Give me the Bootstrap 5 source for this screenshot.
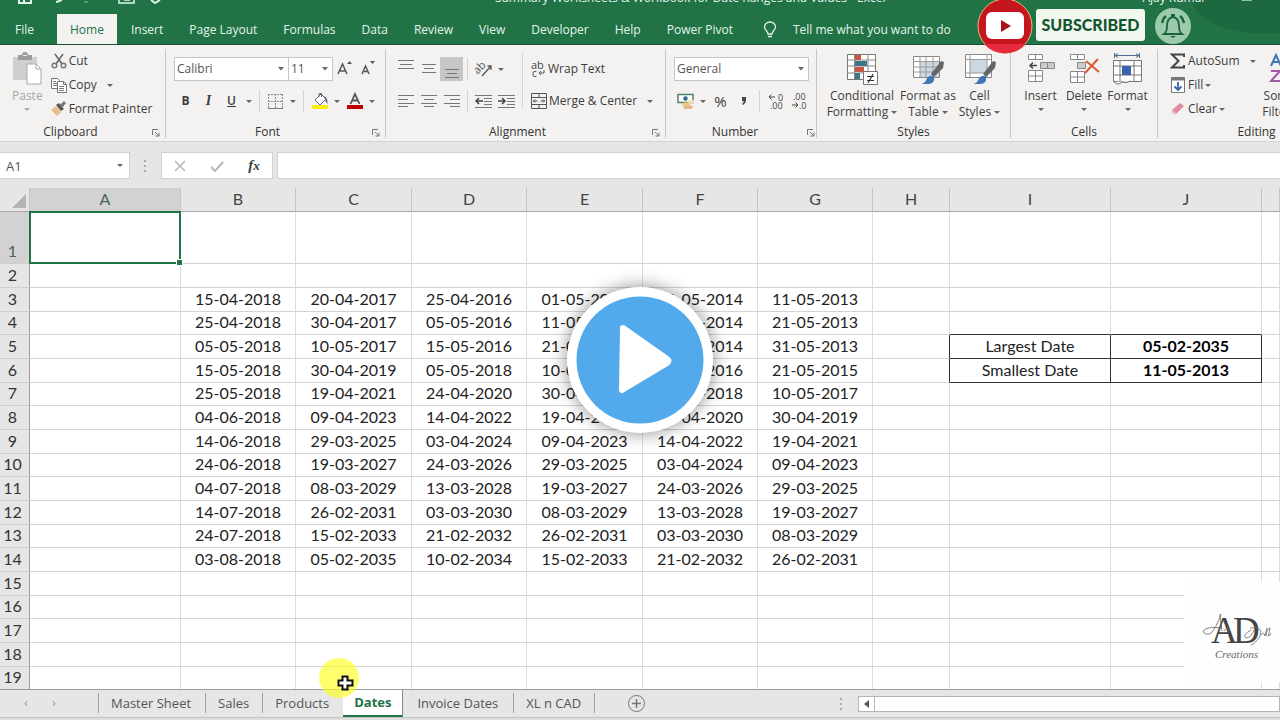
<!DOCTYPE html>
<html lang="en">
<head>
<meta charset="utf-8">
<meta name="viewport" content="width=device-width, initial-scale=1">
<title>Excel - Dates</title>
<link href="https://cdn.jsdelivr.net/npm/bootstrap@5.3.0/dist/css/bootstrap.min.css" rel="stylesheet">
<style>
:root{--green:#217346;--ink:#3c3c3c}
body{font-family:"Open Sans","Noto Sans",sans-serif;font-size:12px;line-height:16px;color:var(--ink);background:#e6e6e6;overflow:hidden}
button{font:inherit;color:inherit;background:none;border:0;padding:0;white-space:nowrap}
svg{display:block;flex:none}
.app-top{background:var(--green);color:#e4f3ea;border-bottom:1px solid #17502f;background-image:radial-gradient(ellipse 70px 34px at 1262px 0,#1d693f 98%,transparent)}
.title-strip{height:6px}
.title-strip .name-text{flex:1;text-align:center;padding-left:64px}
.tab-strip{height:38px;padding-top:8px}
.tab-strip a{color:#e4f3ea;text-decoration:none;padding:2px 13px 0;line-height:28px;white-space:nowrap;font-weight:500}
.tab-strip a.file{padding-left:15px;padding-right:23px}
.tab-strip a.active{background:#f3f2f1;color:var(--green);margin-right:1px}
.ribbon{background:#f3f2f1;height:97px;padding-top:3px;border-bottom:1px solid #d2d2d2}
.grp{flex:none;border-right:1px solid #c6c6c6;margin:1px 0 3px}
.grp-body{height:75px}
.grp-foot{height:16px;color:#333}
.w-clip{width:166px}.w-font{width:220px}.w-align{width:280px}.w-num{width:151px}.w-sty{width:194px}.w-cell{width:147px}.w-edit{width:198px}
.line3{height:24px;gap:2px}
.stack2{padding-top:8px;gap:8px}
.line2{height:24px}
button.line2{gap:2px}
.ib{display:flex;align-items:center;justify-content:center;width:23px;height:24px}
.ib.on{background:#c8c6c4}
.ib.slim{width:12px}
.vr-line{width:1px;height:22px;background:#d4d4d4}
.caret{display:inline-block;border:3px solid transparent;border-top-color:#666;border-bottom:0;vertical-align:middle}
.pick{appearance:none;border:1px solid #c6c6c6;background:#fff url("data:image/svg+xml,%3Csvg xmlns='http://www.w3.org/2000/svg' width='6' height='4'%3E%3Cpath d='M0 0h6L3 3.5z' fill='%23666'/%3E%3C/svg%3E") no-repeat right 4px center;height:24px;padding:0 2px;color:#555;font:inherit}
.big{display:flex;flex-direction:column;align-items:center;line-height:16px}
.big .pic{height:39px;display:flex;align-items:center}
.fbar{height:46px;padding-top:10px}
.fbar .cellbox{background:#fff;border:1px solid #d0d0d0;height:27px}
.fbar input{border:0;outline:0;background:none;min-width:0;font:inherit;font-size:13px;color:#555}
.namebox{width:130px;padding:0 6px}
.fxbox{width:112px}
.grid-wrap{flex:1;min-height:0;overflow:hidden;background:#fff}
.sheet{table-layout:fixed;border-collapse:separate;border-spacing:0;width:100%;font-family:Lato,sans-serif;font-size:16px;line-height:20px;color:#222;background:#fff}
.sheet th,.sheet td{padding:0 0 2px;text-align:center;vertical-align:middle;font-weight:400;border-right:1px solid #dcdcdc;border-bottom:1px solid #d4d4d4;white-space:nowrap;overflow:hidden}
.sheet thead th{background:#e6e6e6;color:#444;border-right-color:#c4c4c4;border-bottom-color:#a8a8a8;height:24px}
.sheet tbody th{background:#e6e6e6;color:#333;border-right-color:#9c9c9c;border-bottom-color:#cfcfcf;padding-right:4px}
.sheet tbody tr{height:24px}
.sheet tbody tr:nth-child(3n+1){height:23px}
.sheet tbody tr:first-child{height:52px}
.sheet tbody tr:first-child th{vertical-align:bottom;background:#d2d2d2;color:#4c6356}
.sheet thead th.hot{background:#d2d2d2;color:#4c6356}
.sheet td.sel{position:relative;overflow:visible;border-color:transparent}
.sheet td.sel::before{content:"";position:absolute;inset:-1px;border:2px solid var(--green)}
.sheet td.sel::after{content:"";position:absolute;right:-3px;bottom:-3px;width:5px;height:5px;background:var(--green);border:1px solid #fff;box-sizing:content-box}
.sheet .bx,.sheet .bx-over{border-bottom-color:#333}
.sheet .bx,.sheet .bx-left{border-right-color:#333}
.sheet .bx.fw-bold{font-weight:700;color:#000}
.sheet .corner{position:relative}
.tri{position:absolute;right:3px;bottom:3px;border-left:14px solid transparent;border-bottom:14px solid #b4b4b4}
.c-head{width:30px}.c-a,.c-j{width:151px}.c-even{width:115px}.c-odd{width:116px}.c-h{width:77px}.c-i{width:161px}
.tabs-foot{height:29px;border-top:1px solid #9c9c9c;border-bottom:1px solid #c4c4c4;font-size:13px;color:#555}
.tabs-foot a{color:#555;text-decoration:none;line-height:20px;border-right:1px solid #a0a0a0;padding:0 13px 0 12px;margin-top:3px;white-space:nowrap}
.tabs-foot a.first{border-left:1px solid #a0a0a0;padding-right:14px}
.tabs-foot a.last-idle{border-right-color:transparent}
.tabs-foot a.invoice{padding-left:14px;padding-right:15px}
.tabs-foot a.active{background:#fff;color:var(--green);font-weight:700;border-bottom:2px solid var(--green);border-right:1px solid #888;margin-top:0;line-height:25px;padding:0 11px}
.hbar{background:#fff;border:1px solid #b4b4b4;height:16px;margin-top:6px}
.hbar .arrow{width:16px;border-right:1px solid #b4b4b4}
.status-foot{height:2px;background:#dedede}
.ov{position:absolute}
.yt{right:247px;top:-2px}
.subd{right:135px;top:9px;width:109px;height:32px;background:#f2f8f0;border-radius:3px;color:#14562f;font-family:Lato,sans-serif;font-weight:900;font-size:16px}
.bell{right:89px;top:8px}
.logo-ad{right:0;bottom:38px;width:96px;height:100px;background:#fefefe}
.play{left:50%;top:50%;transform:translate(-50%,-50%);width:146px;height:146px;border-radius:50%;background:#fff;box-shadow:0 0 18px rgba(0,0,0,.45)}
.glow{left:319px;bottom:22px;width:40px;height:40px;border-radius:50%;background:rgba(255,255,30,.65)}
.cur{left:337px;bottom:28px}
</style>
</head>
<body>
<div class="d-flex flex-column vh-100 position-relative overflow-hidden">
<header class="app-top">
  <div class="title-strip d-flex align-items-end overflow-hidden">
    <svg width="190" height="6" viewBox="0 0 190 6" fill="none" stroke="#e4f3ea" stroke-width="2"><path d="M19 0v3h12V0M24 3V0M56 2q5-1 6-3"/><path d="M119 0v3h15V0M124 0h6" stroke-width="1.5"/><path d="M151 0l4 3 5-3"/><path d="M84 2h4" stroke="#4d9a6c"/></svg>
    <div class="name-text text-nowrap">Summary Worksheets &amp; Workbook for Date Ranges and Values - Excel</div>
    <div class="text-nowrap px-3">Ajay Kumar &nbsp; &nbsp; &nbsp; &nbsp; &nbsp; ▭ &nbsp; &nbsp;</div>
  </div>
  <nav class="tab-strip d-flex">
    <a class="file" href="#">File</a><a class="active" href="#">Home</a><a href="#">Insert</a><a href="#">Page Layout</a><a href="#">Formulas</a><a href="#">Data</a><a href="#">Review</a><a href="#">View</a><a href="#">Developer</a><a href="#">Help</a><a href="#">Power Pivot</a>
    <a href="#" class="d-flex align-items-center gap-3 ms-1"><svg width="14" height="18" viewBox="0 0 14 18" fill="none" stroke="#e4f3ea" stroke-width="1.3"><path d="M5 13c0-3-3.500-4-3.500-7a5.500 5 0 0 1 11 0c0 3-3.500 4-3.500 7zM5 15.500h4"/></svg>Tell me what you want to do</a>
  </nav>
</header>

<section class="ribbon d-flex overflow-hidden" aria-label="Ribbon">
  <div class="grp w-clip">
    <div class="grp-body d-flex">
      <button class="big ps-2 ms-1 me-2" style="color:#a6a6a6"><span class="pic"><svg width="30" height="33" viewBox="0 0 30 33"><path d="M1 5h24v23H1z" fill="#cfcfcf"/><path d="M6 3h4a3 3 0 0 1 6 0h4v5H6z" fill="#9c9c9c"/><path d="M11 3.500h4" stroke="#eee"/><path d="M15 12h9l5 5v15H15z" fill="#fff" stroke="#a8a8a8"/><path d="M24 12v5h5" fill="none" stroke="#a8a8a8"/></svg></span>Paste<span class="caret mt-1 opacity-50"></span></button>
      <div>
        <button class="line3 d-flex align-items-center"><svg width="16" height="16" viewBox="0 0 16 16" fill="none" stroke="#666" stroke-width="1.500"><path d="M4 1l7 10M12 1L5 11"/><circle cx="3.500" cy="12.500" r="2.300" stroke="#777"/><circle cx="12.500" cy="12.500" r="2.300" stroke="#777"/></svg>Cut</button>
        <button class="line3 d-flex align-items-center"><svg width="16" height="16" viewBox="0 0 16 16" fill="#fff" stroke="#777"><path d="M.5 1.500h6l2 2v8h-8zM2 4.500h3M2 6.500h4M2 8.500h4"/><path d="M6.500 4.500h6l3 3v8h-9zM12.500 4.500v3h3M8 9.500h5M8 11.500h5M8 13.500h5"/></svg>Copy<span class="caret ms-2"></span></button>
        <button class="line3 d-flex align-items-center"><svg width="16" height="16" viewBox="0 0 16 16"><path d="M0 9l5-4 5 6-4 4z" fill="#e8bd8c"/><path d="M5 4l3-2 5 6-3 2z" fill="#555"/><path d="M9 4l4-4 2 2-4 5z" fill="#777"/></svg>Format Painter</button>
      </div>
    </div>
    <div class="grp-foot d-flex"><span class="flex-fill text-center ps-0 pe-2">Clipboard</span><button class="ib slim launch h-auto me-1" aria-label="Clipboard options"></button></div>
  </div>

  <div class="grp w-font">
    <div class="grp-body stack2 d-flex flex-column ps-2">
      <div class="line2 d-flex">
        <select class="pick rounded-0" aria-label="Font" style="width:115px"><option>Calibri</option></select><select class="pick rounded-0 border-start-0" aria-label="Font size" style="width:44px"><option>11</option></select>
        <button class="ib" aria-label="Grow font"><svg width="16" height="18" viewBox="0 0 16 18" fill="none" stroke="#555" stroke-width="1.500"><path d="M1 14L5.500 4 10 14M3 11h5"/><path d="M10 4l2.500-3L15 4z" fill="#555" stroke="none"/></svg></button>
        <button class="ib" aria-label="Shrink font"><svg width="16" height="18" viewBox="0 0 16 18" fill="none" stroke="#555" stroke-width="1.500"><path d="M2 14l3.500-8L9 14M4 11.500h4"/><path d="M10 1h5l-2.500 3z" fill="#555" stroke="none"/></svg></button>
      </div>
      <div class="line2 d-flex align-items-center">
        <button class="ib fw-bold">B</button><button class="ib fst-italic fw-bold" style="font-family:'Liberation Serif',serif;font-size:14px">I</button><button class="ib text-decoration-underline fw-semibold">U</button><button class="ib slim" aria-label="Underline style"><span class="caret"></span></button>
        <span class="vr-line mx-1"></span>
        <button class="ib" aria-label="Borders"><svg width="15" height="15" viewBox="0 0 15 15" fill="none" stroke="#888"><path d="M.5 0v14M14.500 0v14M7.500 0v14M0 .5h15M0 7.500h15" stroke-dasharray="2 1"/><path d="M0 14.500h15" stroke="#777"/></svg></button><button class="ib slim" aria-label="Border style"><span class="caret"></span></button>
        <span class="vr-line mx-1"></span>
        <button class="ib" aria-label="Fill colour"><svg width="18" height="18" viewBox="0 0 18 18"><path d="M1 13h16v4H1z" fill="#f4f000"/><path d="M4 8l6-6 5 5-6 6z" fill="#fff" stroke="#666"/><path d="M8 5V1.500h2.500V5" fill="none" stroke="#666"/><path d="M13 4q4 2 3.500 8Q14 9 13 4z" fill="#53658c"/></svg></button><button class="ib slim" aria-label="Fill colours"><span class="caret"></span></button>
        <button class="ib" aria-label="Font colour"><svg width="18" height="18" viewBox="0 0 18 18"><path d="M1 13h16v4H1z" fill="#c00000"/><path d="M4.500 12L9 2l4.500 10M6.500 8.500h5" fill="none" stroke="#555" stroke-width="1.800"/></svg></button><button class="ib slim" aria-label="Font colours"><span class="caret"></span></button>
      </div>
    </div>
    <div class="grp-foot d-flex"><span class="flex-fill text-center">Font</span><button class="ib slim launch h-auto me-1" aria-label="Font options"></button></div>
  </div>

  <div class="grp w-align">
    <div class="grp-body d-flex ps-2">
      <div class="stack2 d-flex flex-column">
        <div class="line2 d-flex align-items-center">
          <button class="ib" aria-label="Top align"><svg width="16" height="18" stroke="#777"><path d="M0 .5h16M2 4.500h12M0 8.500h16"/></svg></button><button class="ib" aria-label="Middle align"><svg width="16" height="18" stroke="#777"><path d="M1 4.500h14M3 8.500h10M1 12.500h14"/></svg></button><button class="ib on" aria-label="Bottom align"><svg width="16" height="18" stroke="#777"><path d="M1 9.500h14M3 13.500h10M1 17.500h14"/></svg></button>
          <span class="vr-line mx-1"></span>
          <button class="ib" aria-label="Orientation"><svg width="18" height="18" viewBox="0 0 18 18" fill="none" stroke="#555" stroke-width="1.300"><path d="M7 16L16 6M12.500 6H16v4"/><text x="-5" y="10" transform="rotate(-45 6 7)" font-size="11" fill="#555" stroke="none" dx="3">ab</text></svg></button><button class="ib slim" aria-label="Orientation choices"><span class="caret"></span></button>
        </div>
        <div class="line2 d-flex align-items-center">
          <button class="ib" aria-label="Align left"><svg width="16" height="14" stroke="#777"><path d="M0 1.500h16M0 5.500h10M0 9.500h16M0 12.500h10"/></svg></button><button class="ib" aria-label="Center"><svg width="16" height="14" stroke="#777"><path d="M0 1.500h16M3 5.500h10M0 9.500h16M3 12.500h10"/></svg></button><button class="ib" aria-label="Align right"><svg width="16" height="14" stroke="#777"><path d="M0 1.500h16M6 5.500h10M0 9.500h16M6 12.500h10"/></svg></button>
          <span class="vr-line mx-1"></span>
          <button class="ib" aria-label="Decrease indent"><svg width="17" height="15" fill="none" stroke="#777"><path d="M0 1.500h17M9 4.500h8M9 7.500h8M9 10.500h8M0 13.500h17"/><path d="M1 7h7M4 4L1 7l3 3" stroke="#444" stroke-width="1.500"/></svg></button><button class="ib" aria-label="Increase indent"><svg width="17" height="15" fill="none" stroke="#777"><path d="M0 1.500h17M9 4.500h8M9 7.500h8M9 10.500h8M0 13.500h17"/><path d="M0 7h7M4 4l3 3-3 3" stroke="#444" stroke-width="1.500"/></svg></button>
        </div>
      </div>
      <span class="vr-line h-75 mt-1 ms-1 me-2"></span>
      <div class="stack2 d-flex flex-column">
        <button class="line2 d-flex align-items-center"><svg width="15" height="17" viewBox="0 0 15 17" fill="#444"><text x="0" y="8" font-size="11">ab</text><text x="1" y="16" font-size="10">c</text><path d="M13 9v3H8M10 10l-2 2 2 2" fill="none" stroke="#555"/></svg>Wrap Text</button>
        <button class="line2 d-flex align-items-center"><svg width="16" height="16" viewBox="0 0 16 16" fill="none" stroke="#555"><path d="M.5.5h15v15H.5zM.5 4.500h15M.5 11.500h15M8 .5v4M8 11.500v4"/><path d="M2 8h4.500M9.500 8H14M4 6.500L2.500 8 4 9.500M12 6.500L13.500 8 12 9.500"/></svg>Merge &amp; Center<span class="caret ms-2"></span></button>
      </div>
    </div>
    <div class="grp-foot d-flex"><span class="flex-fill text-center">Alignment</span><button class="ib slim launch h-auto me-1" aria-label="Alignment options"></button></div>
  </div>

  <div class="grp w-num">
    <div class="grp-body stack2 d-flex flex-column ps-2">
      <select class="pick rounded-0" aria-label="Number format" style="width:135px"><option>General</option></select>
      <div class="line2 d-flex align-items-center">
        <button class="ib" aria-label="Accounting format"><svg width="18" height="17" viewBox="0 0 18 17"><path d="M1 1.500h15v8H1z" fill="#fff" stroke="#4f7f68" stroke-width="1.500"/><circle cx="8.500" cy="5.500" r="2.200" fill="#35688c"/><ellipse cx="9" cy="11" rx="4" ry="1.800" fill="#f2c878"/><ellipse cx="11" cy="14" rx="5" ry="2" fill="#e6b98a"/><ellipse cx="14" cy="8.500" rx="3" ry="2" fill="#f2e1b8"/></svg></button><button class="ib slim" aria-label="Currencies"><span class="caret"></span></button>
        <button class="ib" style="font-size:15px">%</button><button class="ib" aria-label="Comma style"><svg width="6" height="10" viewBox="0 0 6 10"><path d="M1 1h4v3q0 3-3 5l-1-1q2-1.500 1.500-3H1z" fill="#444"/></svg></button>
        <span class="vr-line mx-1"></span>
        <button class="ib" aria-label="Increase decimal"><svg width="16" height="16" viewBox="0 0 16 16" fill="#444"><path d="M1 4h6M3.500 1.500L1 4l2.500 2.500" fill="none" stroke="#444"/><text x="10" y="8" font-size="9">0</text><text x="2" y="16" font-size="9">.00</text></svg></button>
        <button class="ib" aria-label="Decrease decimal"><svg width="16" height="16" viewBox="0 0 16 16" fill="#444"><text x="2" y="7" font-size="9">.00</text><path d="M1 12h6M4.500 9.500L7 12l-2.500 2.500" fill="none" stroke="#444"/><text x="8" y="16" font-size="9">.0</text></svg></button>
      </div>
    </div>
    <div class="grp-foot d-flex"><span class="flex-fill text-center">Number</span><button class="ib slim launch h-auto" aria-label="Number options"></button></div>
  </div>

  <div class="grp w-sty">
    <div class="grp-body d-flex justify-content-center">
      <button class="big" style="width:75px"><span class="pic"><svg width="32" height="32" viewBox="0 0 32 32"><path d="M1.500 1.500h28v25h-28z" fill="#fff" stroke="#777"/><path d="M8.500 1v25M22 1v25M1 7h28M1 13h28M1 20h28" stroke="#888" fill="none"/><path d="M9 2h6v5H9zM9 14h9v5H9z" fill="#c95640"/><path d="M9 8h12v5H9zM9 20h5v6H9z" fill="#3f7386"/><path d="M17.500 18.500h14v13h-14z" fill="#fff" stroke="#777"/><path d="M21 23.500h7M21 27.500h7M27 21l-5 9" stroke="#333" stroke-width="1.200"/></svg></span><span>Conditional<br>Formatting <i class="caret"></i></span></button>
      <button class="big" style="width:57px"><span class="pic"><svg width="32" height="32" viewBox="0 0 32 32"><path d="M1.500 3.500h26v21h-26z" fill="#fff" stroke="#888"/><path d="M8 9h19v15H8z" fill="#cbd8e2"/><path d="M8 3v21M14 3v21M21 3v21M1 8.500h26M1 14h26M1 19h26" stroke="#999" fill="none"/><path d="M19 21L29 8l3 1-1 6-9 9z" fill="#666"/><path d="M9 31q5-1 6-6 4-4 7-1 1 6-5 7z" fill="#3f76b5"/></svg></span><span>Format as<br>Table <i class="caret"></i></span></button>
      <button class="big" style="width:46px"><span class="pic"><svg width="32" height="32" viewBox="0 0 32 32"><path d="M1.500 1.500h26v23h-26z" fill="#fff" stroke="#888"/><path d="M6 7h17v13H6z" fill="#cbd8e2"/><path d="M6 1v23M23 1v23M1 6.500h26M1 20h26" stroke="#999" fill="none"/><path d="M19 21L29 8l3 1-1 6-9 9z" fill="#666"/><path d="M9 31q5-1 6-6 4-4 7-1 1 6-5 7z" fill="#3f76b5"/></svg></span><span>Cell<br>Styles <i class="caret"></i></span></button>
    </div>
    <div class="grp-foot text-center">Styles</div>
  </div>

  <div class="grp w-cell">
    <div class="grp-body d-flex ps-2">
      <button class="big" style="width:43px"><span class="pic"><svg width="28" height="32" viewBox="0 0 28 32" fill="#fff" stroke="#888"><path d="M1.500 1.500h14v5h-14zM8.500 1.500v5M1.500 17.500h14v11h-14zM8.500 17.500v11M1.500 23h14"/><path d="M13.500 9.500h14v6h-14zM20.500 9.500v6" fill="#ccc"/><path d="M10 12.500H3M6 9.500l-3 3 3 3" stroke="#444" fill="none" stroke-width="1.500"/></svg></span>Insert<span class="caret mt-1"></span></button>
      <button class="big" style="width:44px"><span class="pic"><svg width="32" height="32" viewBox="0 0 32 32" fill="#fff" stroke="#888"><path d="M2.500 1.500h14v5h-14zM9.500 1.500v5M2.500 18.500h14v11h-14zM9.500 18.500v11M2.500 24h14"/><path d="M9.500 9.500h8v6h-8z" fill="#ccc"/><path d="M18 8l13 11M30 6L17 20" stroke="#d9573a" stroke-width="2"/></svg></span>Delete<span class="caret mt-1"></span></button>
      <button class="big" style="width:43px"><span class="pic"><svg width="32" height="32" viewBox="0 0 32 32" fill="#fff" stroke="#777"><path d="M2.500 0v5M27.500 0v5M3 2.500h24M6 .5l-3 2 3 2M24 .5l3 2-3 2" fill="none" stroke="#4d6f90"/><path d="M1.500 7.500h28v21h-28zM8 7.500v21M22 7.500v21M1.500 13h28M1.500 22h28"/><path d="M10 13h9v9h-9z" fill="#3a62ad" stroke="none"/><path d="M2 29q4 4 8 0 4 2 9-1" /></svg></span>Format<span class="caret mt-1"></span></button>
    </div>
    <div class="grp-foot text-center">Cells</div>
  </div>

  <div class="grp w-edit">
    <div class="grp-body d-flex ps-2">
      <div class="ms-1" style="width:88px">
        <button class="line3 d-flex align-items-center"><svg width="16" height="16" viewBox="0 0 16 16" fill="none" stroke="#444" stroke-width="2"><path d="M14 4V1.500H2L8.500 8 2 14.500h12V12"/></svg>AutoSum<span class="caret ms-2"></span></button>
        <button class="line3 d-flex align-items-center"><svg width="16" height="16" viewBox="0 0 16 16" fill="#fff" stroke="#777"><path d="M1.500.5h13v15h-13z"/><path d="M1 2h14" stroke-width="3"/><path d="M8 5v8M4.500 9.500L8 13l3.500-3.500" fill="none" stroke="#3a62ad" stroke-width="1.800"/></svg>Fill<span class="caret"></span></button>
        <button class="line3 d-flex align-items-center"><svg width="16" height="16" viewBox="0 0 16 16"><path d="M2 9l8-7 4 3-8 8z" fill="#df8ba3"/><path d="M2 9l4 4-2 1-3-3z" fill="#f3c6d0"/></svg>Clear<span class="caret"></span></button>
      </div>
      <button class="big" style="width:46px"><span class="pic"><svg width="32" height="32" viewBox="0 0 32 32" fill="none" stroke-width="2"><path d="M6 13L11 2l5 11M8 9h6" stroke="#3f76b5"/><path d="M6 18h9L6 28h10" stroke="#a35aa8"/><path d="M19 10h12l-5 7v8l-3-2v-6z" fill="#777"/></svg></span><span>Sort &amp;<br>Filter <i class="caret"></i></span></button>
    </div>
    <div class="grp-foot text-center">Editing</div>
  </div>
</section>

<section class="fbar d-flex" aria-label="Formula bar">
  <div class="cellbox namebox d-flex align-items-center border-start-0"><input class="w-100 p-0" aria-label="Name box" value="A1"><span class="caret"></span></div>
  <svg class="mx-2" width="15" height="27" fill="#aaa"><path d="M6 8h2v2H6zM6 13h2v2H6zM6 18h2v2H6z"/></svg>
  <div class="cellbox fxbox d-flex align-items-center justify-content-around">
    <button aria-label="Cancel"><svg width="12" height="12" stroke="#b8b8b8" stroke-width="1.500"><path d="M1 1l10 10M11 1L1 11"/></svg></button>
    <button aria-label="Enter"><svg width="14" height="12" fill="none" stroke="#b8b8b8" stroke-width="2"><path d="M1 7l4 4 8-9"/></svg></button>
    <button class="fst-italic fw-bold" style="font-family:'Liberation Serif',serif;font-size:15px">f<small>x</small></button>
  </div>
  <div class="cellbox flex-fill ms-1 d-flex border-end-0"><input class="flex-fill" aria-label="Formula"></div>
</section>

<main class="grid-wrap">
  <table class="sheet">
    <colgroup><col class="c-head"><col class="c-a"><col class="c-even"><col class="c-odd"><col class="c-even"><col class="c-odd"><col class="c-even"><col class="c-even"><col class="c-h"><col class="c-i"><col class="c-j"><col></colgroup>
    <thead><tr><th class="corner"><span class="tri"></span></th><th class="hot">A</th><th>B</th><th>C</th><th>D</th><th>E</th><th>F</th><th>G</th><th>H</th><th>I</th><th>J</th><th></th></tr></thead>
    <tbody id="rows"></tbody>
  </table>
</main>

<footer>
  <div class="tabs-foot d-flex align-items-start">
    <div class="d-flex" style="width:98px"><button class="ms-4 mt-1 opacity-50" aria-label="Previous sheet">‹</button><button class="ms-4 mt-1 opacity-50" aria-label="Next sheet">›</button></div>
    <a class="first" href="#">Master Sheet</a><a href="#">Sales</a><a class="last-idle" href="#">Products</a><a class="active" href="#">Dates</a><a class="invoice" href="#">Invoice Dates</a><a href="#">XL n CAD</a>
    <button class="ms-4 ps-2 mt-1" aria-label="New sheet"><svg width="19" height="19" fill="none" stroke="#777"><circle cx="9.500" cy="9.500" r="8"/><path d="M5 9.500h9M9.500 5v9" stroke-width="1.500"/></svg></button>
    <svg class="ms-auto me-2" width="16" height="27" fill="#aaa"><path d="M6 8h2v2H6zM6 13h2v2H6zM6 18h2v2H6z"/></svg>
    <div class="hbar d-flex" style="width:33%"><button class="arrow d-flex align-items-center justify-content-center" aria-label="Scroll left"><svg width="5" height="8" fill="#555"><path d="M5 0v8L0 4z"/></svg></button></div>
  </div>
  <div class="status-foot"></div>
</footer>

<svg class="ov yt" width="56" height="56" viewBox="0 0 56 56"><circle cx="28" cy="28" r="27" fill="#c4161c" stroke="#e8b77a"/><path d="M7 46a28 28 0 0 0 42 0z" fill="#e52b3c"/><rect x="9" y="14" width="38" height="27" rx="6" fill="#fff"/><path d="M24 22v12l10-6z" fill="#a81218"/></svg>
<button class="ov subd">SUBSCRIBED</button>
<svg class="ov bell" width="36" height="36" viewBox="0 0 36 36"><circle cx="18" cy="18" r="18" fill="#9ccbab"/><path d="M9 26q3-2 3-8 0-8 6-9 6 1 6 9 0 6 3 8zM17 9V7h2v2" fill="none" stroke="#1b6239" stroke-width="1.800"/><path d="M15 28h6l-3 2z" fill="#1b6239"/><path d="M7 15q1-5 4-7M29 15q-1-5-4-7" fill="none" stroke="#1b6239" stroke-width="2.200"/></svg>

<div class="ov logo-ad"><svg width="96" height="100" viewBox="0 0 96 100" fill="none" stroke="#666" stroke-width="1"><text x="27" y="61" font-family="Liberation Serif,serif" font-size="37" fill="#444" stroke="none">A</text><text x="49" y="61" font-family="Liberation Serif,serif" font-size="37" fill="#444" stroke="none">D</text><path d="M37 32q-5 15-11 20-6 1-7-3 4-5 19-3M36 32q1 12 2 17M40 49q4-6 5 0M67 48q-9 5-5 8 5 0 9-10M66 46q14-2 10 8-5 8-9 9M77 53q3-4 4 1l2-8M82 54q1-8 4-8-1 7-2 8 2 0 3-3" stroke-width=".8"/><text x="31" y="76" font-family="Liberation Serif,serif" font-style="italic" font-size="11" fill="#666" stroke="none">Creations</text></svg></div>

<button class="ov play d-flex align-items-center justify-content-center" aria-label="Play"><svg width="128" height="128" viewBox="0 0 128 128"><circle cx="64" cy="64" r="63.500" fill="#52a9ec"/><path d="M47 32l44 31q3 2 0 4L46 94z" fill="#fff" stroke="#fff" stroke-width="6" stroke-linejoin="round"/></svg></button>
<span class="ov glow"></span>
<svg class="ov cur" width="17" height="17" viewBox="0 0 17 17"><path d="M5.500 1.500h5v4h5v5h-5v4h-5v-4h-4v-5h4z" fill="#fff" stroke="#111" stroke-width="2"/></svg>
</div>

<script src="https://cdn.jsdelivr.net/npm/bootstrap@5.3.0/dist/js/bootstrap.bundle.min.js"></script>
<script>
const dates = {
  3:["15-04-2018","20-04-2017","25-04-2016","01-05-2015","06-05-2014","11-05-2013"],
  4:["25-04-2018","30-04-2017","05-05-2016","11-05-2015","16-05-2014","21-05-2013"],
  5:["05-05-2018","10-05-2017","15-05-2016","21-05-2015","26-05-2014","31-05-2013"],
  6:["15-05-2018","30-04-2019","05-05-2018","10-05-2017","15-05-2016","21-05-2015"],
  7:["25-05-2018","19-04-2021","24-04-2020","30-04-2019","05-05-2018","10-05-2017"],
  8:["04-06-2018","09-04-2023","14-04-2022","19-04-2021","24-04-2020","30-04-2019"],
  9:["14-06-2018","29-03-2025","03-04-2024","09-04-2023","14-04-2022","19-04-2021"],
  10:["24-06-2018","19-03-2027","24-03-2026","29-03-2025","03-04-2024","09-04-2023"],
  11:["04-07-2018","08-03-2029","13-03-2028","19-03-2027","24-03-2026","29-03-2025"],
  12:["14-07-2018","26-02-2031","03-03-2030","08-03-2029","13-03-2028","19-03-2027"],
  13:["24-07-2018","15-02-2033","21-02-2032","26-02-2031","03-03-2030","08-03-2029"],
  14:["03-08-2018","05-02-2035","10-02-2034","15-02-2033","21-02-2032","26-02-2031"]
};
const extra = {5:["Largest Date","05-02-2035"],6:["Smallest Date","11-05-2013"]};
let html = "";
for (let r = 1; r <= 19; r++) {
  html += `<tr><th scope="row">${r}</th><td class="${r === 1 ? "sel" : ""}"></td>`;
  for (let c = 0; c < 6; c++) html += `<td>${(dates[r] || [])[c] || ""}</td>`;
  const e = extra[r];
  html += e
    ? `<td class="bx-left"></td><td class="bx">${e[0]}</td><td class="bx fw-bold">${e[1]}</td>`
    : r === 4
    ? `<td></td><td class="bx-over"></td><td class="bx-over"></td>`
    : "<td></td><td></td><td></td>";
  html += "<td></td></tr>";
}
document.getElementById("rows").innerHTML = html;
document.querySelectorAll(".launch").forEach(b => {
  b.innerHTML = '<svg width="9" height="9" fill="none" stroke="#777"><path d="M1.500 7V1.500H7M4 4l4 4M8 4.500V8H4.500"/></svg>';
});
</script>
</body>
</html>
